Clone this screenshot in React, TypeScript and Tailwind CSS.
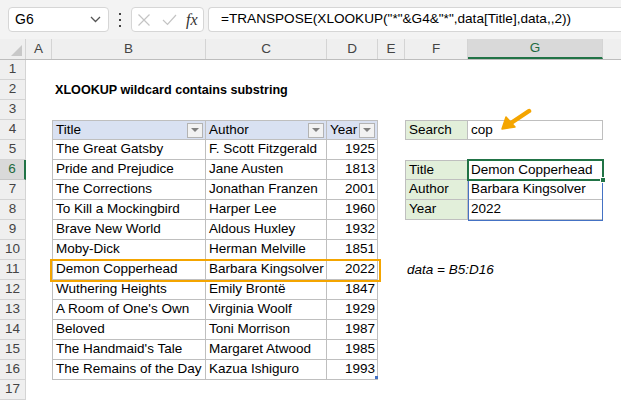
import type { ReactNode } from "react";

const books: [string, string, string][] = [
  ["The Great Gatsby", "F. Scott Fitzgerald", "1925"],
  ["Pride and Prejudice", "Jane Austen", "1813"],
  ["The Corrections", "Jonathan Franzen", "2001"],
  ["To Kill a Mockingbird", "Harper Lee", "1960"],
  ["Brave New World", "Aldous Huxley", "1932"],
  ["Moby-Dick", "Herman Melville", "1851"],
  ["Demon Copperhead", "Barbara Kingsolver", "2022"],
  ["Wuthering Heights", "Emily Brontë", "1847"],
  ["A Room of One's Own", "Virginia Woolf", "1929"],
  ["Beloved", "Toni Morrison", "1987"],
  ["The Handmaid's Tale", "Margaret Atwood", "1985"],
  ["The Remains of the Day", "Kazua Ishiguro", "1993"],
];

// A, B, C, D, E, F, G widths
const widths = ["w-[26px]", "w-[154px]", "w-[121px]", "w-[51px]", "w-[27px]", "w-[63px]", "w-[135px]"];
const letters = ["A", "B", "C", "D", "E", "F", "G"];

type CellSpec = { text?: ReactNode; cls?: string };

function Filter() {
  return (
    <span className="ml-auto mr-[2px] flex h-[15px] w-[16px] items-center justify-center border border-[#b3b3b3] bg-[#f2f2f2]">
      <span className="h-0 w-0 border-x-[4px] border-t-[4px] border-x-transparent border-t-[#808080]" />
    </span>
  );
}

const tb = "border-r border-b border-[#bfbfbf]";

function cellsFor(n: number): CellSpec[] {
  const c: CellSpec[] = [{}, {}, {}, {}, {}, {}, {}];
  if (n === 2) {
    c[1] = {
      text: <span className="whitespace-nowrap text-[12.6px] font-bold">XLOOKUP wildcard contains substring</span>,
      cls: "overflow-visible",
    };
  }
  if (n === 4) {
    c[1] = { text: <><span>Title</span><Filter /></>, cls: `${tb} border-t border-l bg-[#d9e1f2]` };
    c[2] = { text: <><span>Author</span><Filter /></>, cls: `${tb} border-t bg-[#d9e1f2]` };
    c[3] = { text: <><span>Year</span><Filter /></>, cls: `${tb} border-t bg-[#d9e1f2]` };
    c[5] = { text: "Search", cls: `${tb} border-t border-l bg-[#e2efda]` };
    c[6] = { text: "cop", cls: `${tb} border-t` };
  }
  if (n >= 5 && n <= 16) {
    const b = books[n - 5];
    c[1] = { text: b[0], cls: `${tb} border-l` };
    c[2] = { text: b[1], cls: tb };
    c[3] = { text: b[2], cls: `${tb} justify-end pr-[2px]` };
  }
  if (n === 6) {
    c[5] = { text: "Title", cls: `${tb} border-t border-l bg-[#e2efda]` };
    c[6] = { text: "Demon Copperhead", cls: `${tb} border-t` };
  }
  if (n === 7) {
    c[5] = { text: "Author", cls: `${tb} border-l bg-[#e2efda]` };
    c[6] = { text: "Barbara Kingsolver", cls: tb };
  }
  if (n === 8) {
    c[5] = { text: "Year", cls: `${tb} border-l bg-[#e2efda]` };
    c[6] = { text: "2022", cls: tb };
  }
  if (n === 11) {
    c[5] = { text: <span className="whitespace-nowrap italic">data = B5:D16</span>, cls: "overflow-visible !pl-[2px]" };
  }
  return c;
}

function Row({ n }: { n: number }) {
  const cells = cellsFor(n);
  const sel = n === 6;
  return (
    <div className="flex h-[20px]">
      <div
        className={
          sel
            ? "flex w-[26px] shrink-0 items-center justify-center border-b border-r-2 border-b-[#c6c6c6] border-r-[#217346] bg-[#d9d9d9] text-[#1e6b41]"
            : "flex w-[26px] shrink-0 items-center justify-center border-b border-r border-[#d4d4d4] bg-[#efefef] text-[#444]"
        }
      >
        {n}
      </div>
      {cells.map((c, i) => (
        <div key={i} className={`flex h-[20px] shrink-0 items-center pl-[3px] ${widths[i]} ${c.cls ?? ""}`}>
          {c.text}
        </div>
      ))}
      <div className="flex-1" />
    </div>
  );
}

function FormulaBar() {
  return (
    <div className="flex h-[39px] items-center bg-[#f3f3f3] pl-[8px]">
      <div className="flex h-[25px] w-[101px] items-center rounded-[4px] border border-[#d6d6d6] bg-white pl-[6px] pr-[7px] text-[14px]">
        <span>G6</span>
        <svg className="ml-auto" width="11" height="7" viewBox="0 0 11 7">
          <path d="M1 1l4.5 4.5L10 1" fill="none" stroke="#555" strokeWidth="1.3" />
        </svg>
      </div>
      <div className="mx-[10px] flex h-[14px] flex-col justify-between">
        <span className="h-[2px] w-[2px] bg-[#444]" />
        <span className="h-[2px] w-[2px] bg-[#444]" />
        <span className="h-[2px] w-[2px] bg-[#444]" />
      </div>
      <div className="flex h-[25px] w-[73px] items-center rounded-[4px] border border-[#d6d6d6] bg-white pl-[5px]">
        <svg width="14" height="14" viewBox="0 0 14 14">
          <path d="M1.5 1.5l11 11M12.5 1.5l-11 11" stroke="#c4c4c4" strokeWidth="1.2" />
        </svg>
        <svg className="ml-[11px]" width="15" height="12" viewBox="0 0 15 12">
          <path d="M1 6l4.5 4.5L14 1" fill="none" stroke="#c4c4c4" strokeWidth="1.2" />
        </svg>
        <span className="ml-[9px] font-['Liberation_Serif'] text-[16px] italic text-[#333]">fx</span>
      </div>
      <div className="ml-[4px] flex h-[25px] flex-1 items-center rounded-l-[4px] border border-r-0 border-[#d6d6d6] bg-white pl-[12px] text-[13.6px] whitespace-nowrap">
        =TRANSPOSE(XLOOKUP("*"&amp;G4&amp;"*",data[Title],data,,2))
      </div>
    </div>
  );
}

function ColumnHeaders() {
  return (
    <div className="flex h-[21px] border-b border-[#bdbdbd] bg-[#efefef] text-[#444]">
      <div className="relative w-[26px] shrink-0 border-r border-[#d4d4d4]">
        <span className="absolute bottom-[3px] right-[3px] h-0 w-0 border-b-[11px] border-l-[11px] border-b-[#c8c8c8] border-l-transparent" />
      </div>
      {letters.map((l, i) => (
        <div
          key={l}
          className={
            l === "G"
              ? `flex shrink-0 items-center justify-center border-r border-b-2 border-r-[#d4d4d4] border-b-[#217346] bg-[#d9d9d9] text-[#1e6b41] ${widths[i]}`
              : `flex shrink-0 items-center justify-center border-r border-[#d4d4d4] ${widths[i]}`
          }
        >
          {l}
        </div>
      ))}
      <div className="flex-1" />
    </div>
  );
}

export default function App() {
  const rows = Array.from({ length: 17 }, (_, i) => i + 1);
  return (
    <div className="relative h-[400px] w-[621px] overflow-hidden bg-white font-['Liberation_Sans',sans-serif] text-[13.5px] text-black">
      <FormulaBar />
      <ColumnHeaders />
      {rows.map((n) => (
        <Row key={n} n={n} />
      ))}

      {/* result range G6:G8 */}
      <div className="absolute left-[468px] top-[160px] h-[61px] w-[135px] border border-[#4472c4]" />
      {/* active cell G6 */}
      <div className="absolute left-[467px] top-[159px] h-[22px] w-[137px] border-2 border-[#217346]" />
      <div className="absolute left-[600px] top-[177px] h-[6px] w-[6px] border border-white bg-[#217346]" />

      {/* highlighted match row */}
      <div className="absolute left-[50px] top-[259px] h-[23px] w-[331px] border-2 border-[#f4a500]" />

      {/* table resize marker */}
      <div className="absolute left-[375px] top-[376px] h-[3px] w-[3px] bg-[#4472c4]" />

      {/* arrow */}
      <svg className="absolute left-[498px] top-[106px]" width="36" height="28" viewBox="0 0 36 28">
        <path d="M31 5L13 17" stroke="#f4a500" strokeWidth="4.5" strokeLinecap="round" />
        <path d="M4 23L8 11L17 21Z" fill="#f4a500" stroke="#f4a500" strokeWidth="1.5" strokeLinejoin="round" />
      </svg>
    </div>
  );
}
